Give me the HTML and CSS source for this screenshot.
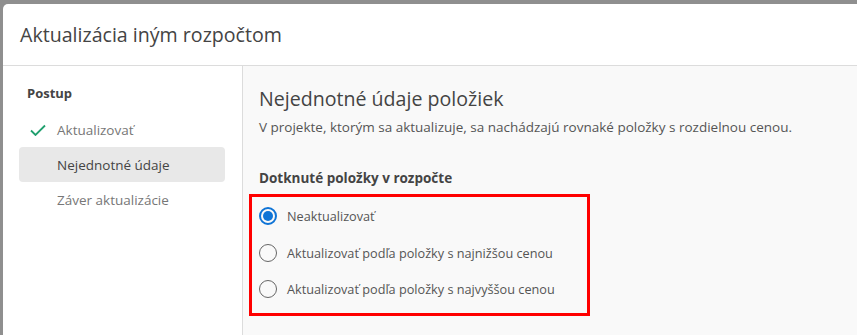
FILE: index.html
```html
<!DOCTYPE html>
<html lang="sk">
<head>
<meta charset="utf-8">
<link rel="stylesheet" href="styles.css">
</head>
<body>
<div class="dialog">
  <div class="header"><h1 class="title">Aktualizácia iným rozpočtom</h1></div>
  <div class="body">
    <nav class="sidebar">
      <div class="side-title">Postup</div>
      <div class="step done">
        <svg class="check" width="16" height="12" viewBox="0 0 16 12"><path d="M1 6.5 L5.5 11 L15 1.5" fill="none" stroke="#21a06f" stroke-width="1.8"/></svg>
        <span>Aktualizovať</span>
      </div>
      <div class="step active"><span>Nejednotné údaje</span></div>
      <div class="step"><span>Záver aktualizácie</span></div>
    </nav>
    <main class="main">
      <h2 class="heading">Nejednotné údaje položiek</h2>
      <p class="desc">V projekte, ktorým sa aktualizuje, sa nachádzajú rovnaké položky s rozdielnou cenou.</p>
      <div class="group-label">Dotknuté položky v rozpočte</div>
      <div class="options">
        <label class="option"><span class="radio checked"></span><span>Neaktualizovať</span></label>
        <label class="option"><span class="radio"></span><span>Aktualizovať podľa položky s najnižšou cenou</span></label>
        <label class="option"><span class="radio"></span><span>Aktualizovať podľa položky s najvyššou cenou</span></label>
      </div>
    </main>
  </div>
</div>
</body>
</html>
```
FILE: styles.css
```css
html, body { margin: 0; padding: 0; height: 100%; }
body {
  background: #8f8f8f;
  font-family: "Open Sans", "Noto Sans", sans-serif;
  overflow: hidden;
}
.dialog {
  margin: 4px 0 0 3px;
  height: calc(100% - 4px);
  background: #fff;
  border-top-left-radius: 5px;
  display: flex;
  flex-direction: column;
}
.header {
  height: 62px;
  border-bottom: 1px solid #dcdcdc;
  display: flex;
  align-items: center;
  padding-left: 17px;
  box-sizing: border-box;
  flex: none;
}
.title {
  margin: 0;
  font-size: 19.6px;
  font-weight: 400;
  color: #444;
}
.body { flex: 1; display: flex; }
.sidebar {
  width: 240px;
  flex: none;
  border-right: 1px solid #dcdcdc;
  padding: 16px 17px 0 16px;
  box-sizing: border-box;
}
.side-title {
  font-size: 13px;
  font-weight: 700;
  color: #444;
  padding-left: 8px;
  height: 22px;
  line-height: 22px;
  margin-bottom: 8px;
}
.step {
  height: 35px;
  display: flex;
  align-items: center;
  padding-left: 38px;
  position: relative;
  font-size: 13.5px;
  color: #777;
  border-radius: 4px;
}
.step .check { position: absolute; left: 11px; top: 12px; }
.step.active { background: #e8e8e8; color: #444; }
.main {
  flex: 1;
  background: #f9f9f9;
  padding: 20px 0 0 6px;
}
.heading {
  margin: 0 0 0 10px;
  font-size: 19.6px;
  font-weight: 400;
  color: #444;
  line-height: 26px;
}
.desc {
  margin: 5px 0 0 10px;
  font-size: 13.5px;
  color: #555;
  line-height: 20px;
}
.group-label {
  margin: 32px 0 0 10px;
  font-size: 13.5px;
  font-weight: 700;
  color: #444;
  line-height: 18px;
}
.options {
  margin-top: 7px;
  width: 341px;
  border: 3px solid #ff0000;
  box-sizing: border-box;
  padding: 1px 0 5px 7px;
}
.option {
  display: flex;
  align-items: center;
  height: 36.5px;
  font-size: 12.7px;
  color: #555;
}
.radio {
  width: 18px;
  height: 18px;
  box-sizing: border-box;
  border: 1px solid #666;
  border-radius: 50%;
  margin-right: 10px;
  flex: none;
  display: flex;
  align-items: center;
  justify-content: center;
}
.radio.checked { border: 2px solid #0f74d6; }
.radio.checked::after {
  content: "";
  width: 10px;
  height: 10px;
  border-radius: 50%;
  background: #0f74d6;
}
```
